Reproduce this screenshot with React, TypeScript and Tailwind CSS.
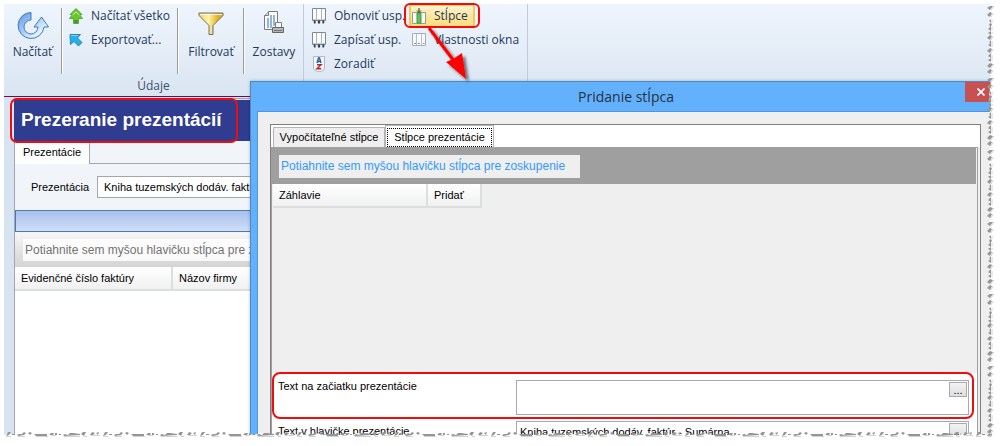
import type { ReactNode } from 'react';
import clsx from 'clsx';

const GROUP_HINT = 'Potiahnite sem myšou hlavičku stĺpca pre zoskupenie';

function RefreshIcon() {
  return (
    <svg className="shrink-0" width="32" height="28" viewBox="0 0 32 28">
      <defs>
        <linearGradient id="refresh" x1="0" y1="0" x2="1" y2="1">
          <stop offset="0" stopColor="#5f97df" />
          <stop offset="0.45" stopColor="#a6cbf7" />
          <stop offset="0.75" stopColor="#e8f4ff" />
          <stop offset="1" stopColor="#63b4f2" />
        </linearGradient>
      </defs>
      <path
        d="M14 0.500 A13 13 0 1 0 27 15 L31.500 15 L24.500 5 L17 15 L21 15 A7 7 0 1 1 14 8 Z"
        fill="url(#refresh)"
        stroke="#3f78c4"
        strokeLinejoin="round"
      />
    </svg>
  );
}

function DoubleUpIcon() {
  return (
    <svg className="shrink-0" width="14" height="16" viewBox="0 0 14 16">
      <path d="M7 0.500 L13 6.500 L10.500 6.500 L13.500 10.500 L9.500 10.500 L9.500 15.500 L4.500 15.500 L4.500 10.500 L0.500 10.500 L3.500 6.500 L1 6.500 Z" fill="#6cc52c" stroke="#4a9c22" strokeWidth="0.800" />
      <path d="M3.500 7 L7 4 L10.500 7" fill="none" stroke="#d3f2ae" />
      <path d="M5.500 12 H8.500 V15 H5.500 Z" fill="#3e9224" />
    </svg>
  );
}

function ExportIcon() {
  return (
    <svg className="shrink-0" width="14" height="14" viewBox="0 0 14 14">
      <path d="M1 1.500 H11.500 L8.500 5 L13 9.500 L9.500 13 L5 8.500 L1.500 11.500 Z" fill="#27b0e8" stroke="#1c7fae" strokeWidth="0.900" />
      <path d="M2 2.500 H9" stroke="#7bd6fa" />
    </svg>
  );
}

function FilterIcon() {
  return (
    <svg className="shrink-0" width="26" height="24" viewBox="0 0 26 24">
      <defs>
        <linearGradient id="funnel" x1="0" y1="0" x2="1" y2="0">
          <stop offset="0.100" stopColor="#f6dc62" />
          <stop offset="0.400" stopColor="#fff3ae" />
          <stop offset="0.800" stopColor="#dfb014" />
        </linearGradient>
      </defs>
      <path d="M1 1 H25 V3.500 L15 13.500 V22.500 H11 V13.500 L1 3.500 Z" fill="url(#funnel)" stroke="#6f6f6f" />
      <path d="M2 2.500 H24" stroke="#f6f3df" />
    </svg>
  );
}

function ReportIcon() {
  return (
    <svg className="shrink-0" width="22" height="24" viewBox="0 0 22 24">
      <path d="M5.500 1.500 H14.500 V19.500 H1.500 V5.500 Z" fill="#fafafa" stroke="#7c7c7c" />
      <path d="M5.500 1.500 V5.500 H1.500" fill="#d8d8d8" stroke="#7c7c7c" />
      <path d="M5 8 V18 M8 5 V18 M11 5 V16" stroke="#94b5d8" strokeWidth="2" />
      <path d="M12.500 12.500 H18.500 V17.500 H12.500 Z" fill="#f7f7f7" stroke="#7c7c7c" />
      <path d="M9.500 17.500 H20.500 V22.500 H9.500 Z" fill="#b5b5b5" stroke="#676767" />
      <path d="M11 20.500 H19" stroke="#777777" />
    </svg>
  );
}

function ColumnsIcon() {
  return (
    <svg className="shrink-0" width="14" height="16" viewBox="0 0 14 16">
      <path d="M0.500 0.500 H13.500 V12.500 H0.500 Z" fill="#fbfcfe" stroke="#7f8791" />
      <path d="M4.500 1 V12 M9.500 1 V12" stroke="#aab2bc" />
      <path d="M1 11.500 H13" stroke="#c3cad2" />
      <path d="M1 14 H4 M5.500 14 H8.500 M10 14 H13" stroke="#8d939b" />
      <path d="M2 14 H3.500 M6 14 H8 M10.500 14 H12" stroke="#3c4148" strokeWidth="3" />
    </svg>
  );
}

function SortIcon() {
  return (
    <svg className="shrink-0" width="14" height="16" viewBox="0 0 14 16">
      <path d="M1.500 0.500 H12.500 V12 C12.500 14 10 15.500 7 15.500 C4 15.500 1.500 14 1.500 12 Z" fill="#f5f7fa" stroke="#b0b8c2" />
      <path d="M5 7 L6.500 2 H7.500 L9 7 M5.500 5.500 H8.500" fill="none" stroke="#21609f" strokeWidth="1.400" />
      <path d="M5 8.800 H9 L5 12.800 H9.200" fill="none" stroke="#b52a2a" strokeWidth="1.500" />
    </svg>
  );
}

function AddColumnIcon() {
  return (
    <svg className="shrink-0" width="14" height="16" viewBox="0 0 14 16">
      <path d="M0.500 4.500 H13.500 V15.500 H0.500 Z" fill="#fdfcf4" stroke="#9a9a90" />
      <path d="M5 5 H9 V15 H5 Z" fill="#5fc25a" stroke="#419b45" />
      <path d="M7 0 V4 M5 2.500 L7 4.500 L9 2.500" fill="none" stroke="#303030" />
    </svg>
  );
}

function PropertiesIcon() {
  return (
    <svg className="shrink-0" width="14" height="14" viewBox="0 0 14 14">
      <path d="M0.500 0.500 H13.500 V12.500 H0.500 Z" fill="#f6f8fb" stroke="#a5adb8" />
      <path d="M4.500 1 V12 M9.500 1 V12" stroke="#b7bec7" />
      <path d="M2 10.500 H4 M6 10.500 H8 M11 10.500 H12.500" stroke="#8b929b" />
    </svg>
  );
}

function LargeButton({ icon, label, className }: { icon: ReactNode; label: string; className?: string }) {
  return (
    <button type="button" className={clsx('flex h-[60px] flex-col items-center justify-between', className)}>
      {icon}
      <span className="leading-6">{label}</span>
    </button>
  );
}

function SmallButton({ icon, label }: { icon: ReactNode; label: string }) {
  return (
    <button type="button" className="flex h-6 items-center gap-2 whitespace-nowrap px-[6px]">
      {icon}
      {label}
    </button>
  );
}

function Divider() {
  return <div className="mt-1 h-[66px] w-[2px] shrink-0 border-l border-[#9a9a9a] bg-white" />;
}

function Ribbon() {
  return (
    <header className="flex h-[93px] shrink-0 border-b border-[#850051] bg-linear-to-b from-[#eef5fd] via-[#e5edf8] to-[#d9e5f1] font-['Open_Sans',sans-serif] text-[12px] text-[#1e395b]">
      <div className="flex w-[300px] shrink-0 flex-col border-r border-[#c0cbdb]">
        <div className="flex h-[70px]">
          <LargeButton icon={<RefreshIcon />} label="Načítať" className="w-[57px] pt-2" />
          <Divider />
          <div className="flex w-[114px] flex-col">
            <SmallButton icon={<DoubleUpIcon />} label="Načítať všetko" />
            <SmallButton icon={<ExportIcon />} label="Exportovať..." />
          </div>
          <Divider />
          <LargeButton icon={<FilterIcon />} label="Filtrovať" className="w-16 pt-2" />
          <Divider />
          <LargeButton icon={<ReportIcon />} label="Zostavy" className="w-[58px] pt-[6px]" />
        </div>
        <div className="text-center leading-6 text-[#3b5170]">Údaje</div>
      </div>
      <div className="flex w-[224px] shrink-0 border-r border-[#c0cbdb]">
        <div className="flex w-[102px] flex-col items-start pl-[2px]">
          <SmallButton icon={<ColumnsIcon />} label="Obnoviť usp." />
          <SmallButton icon={<ColumnsIcon />} label="Zapísať usp." />
          <SmallButton icon={<SortIcon />} label="Zoradiť" />
        </div>
        <div className="flex flex-col items-start">
          <button
            type="button"
            className="mx-[3px] flex h-6 items-center gap-2 whitespace-nowrap border-2 border-[#f0c95f] bg-linear-to-b from-[#fdf3cf] via-[#fde7a0] to-[#fbdc7e] pr-[5px] pl-px"
          >
            <AddColumnIcon />
            Stĺpce
          </button>
          <SmallButton icon={<PropertiesIcon />} label="Vlastnosti okna" />
        </div>
      </div>
    </header>
  );
}

const headCell =
  'h-6 border-r-2 border-b-2 border-[#dcdfdf] bg-linear-to-b from-white to-[#f1f1f1] px-[6px] text-left font-normal whitespace-nowrap';

function PresentationView() {
  return (
    <section className="grow bg-[#d6e4f2] pl-[10px] pt-[1px]">
      <div className="flex h-full flex-col border-t border-[#a3a6aa]">
        <h1 className="mt-px flex h-[41px] shrink-0 items-center bg-[#303c8f] px-[7px] text-[19px] font-bold text-white">
          Prezeranie prezentácií
        </h1>
        <div className="flex grow flex-col border-l border-[#a3a6aa] bg-[#f1f4f9]">
          <div className="flex h-[23px]" role="tablist">
            <button type="button" role="tab" aria-selected="true" className="w-[75px] border-r border-[#a3a6aa] bg-white">
              Prezentácie
            </button>
            <div className="grow border-b border-[#a3a6aa]" />
          </div>
          <div className="flex h-[46px] items-center pl-4">
            <label htmlFor="presentation" className="w-[66px]">
              Prezentácia
            </label>
            <input
              id="presentation"
              defaultValue="Kniha tuzemských dodáv. faktúr - Sumárna"
              className="h-[22px] w-80 border border-[#a3a6aa] bg-white px-[6px]"
            />
          </div>
          <div className="h-[22px] border border-[#4f79b3] bg-linear-to-b from-[#a7c0ec] to-[#d0dff8]" />
          <div className="mt-px bg-linear-to-b from-[#f6f6f6] to-[#d3d3d3] px-2 py-[6px]">
            <div className="w-80 bg-white/85 px-[2px] text-[12px] leading-[22px] whitespace-nowrap text-[#737373]">{GROUP_HINT}</div>
          </div>
          <div className="grow bg-white">
            <table className="border-separate border-spacing-0">
              <thead>
                <tr>
                  <th className={clsx(headCell, 'w-[158px]')}>Evidenčné číslo faktúry</th>
                  <th className={clsx(headCell, 'w-[158px]')}>Názov firmy</th>
                </tr>
              </thead>
            </table>
          </div>
        </div>
      </div>
    </section>
  );
}

function TextRow({ id, label, value, tall, marked }: { id: string; label: string; value?: string; tall?: boolean; marked?: boolean }) {
  return (
    <div className="relative flex items-start pr-[6px] pl-[6px]">
      <label htmlFor={id} className="w-[238px] shrink-0 leading-[13px]">
        {label}
      </label>
      <div className={clsx('relative grow', tall ? 'h-[35px]' : 'h-[22px]')}>
        <textarea
          id={id}
          defaultValue={value}
          className="block h-full w-full resize-none overflow-hidden border border-[#a9a9b0] bg-white px-[3px] leading-[20px]"
        />
        <button
          type="button"
          aria-label={label}
          className="absolute top-[2px] right-[2px] flex h-[15px] w-[18px] items-center justify-center border border-[#a9a9b0] bg-linear-to-b from-[#f3f3f3] to-[#dedede] leading-3"
        >
          ...
        </button>
      </div>
      {marked && <div className="pointer-events-none absolute -top-2 right-px -bottom-1 left-0 rounded-lg border-2 border-[#f00c0c]" />}
    </div>
  );
}

function AddColumnDialog() {
  return (
    <div
      role="dialog"
      aria-labelledby="dialog-title"
      className="absolute top-[77px] -right-[11px] -bottom-2 left-[246px] flex flex-col border border-[#4b8ac6] bg-[#63b1fd] shadow-[0_0_3px_rgba(0,0,0,0.25)]"
    >
      <div className="relative flex h-[29px] shrink-0 items-center justify-center">
        <h2 id="dialog-title" className="font-['Open_Sans',sans-serif] text-[14px] text-[#24323f]">
          Pridanie stĺpca
        </h2>
        <button
          type="button"
          aria-label="Zavrieť"
          className="absolute top-0 right-1 flex h-5 w-8 items-center justify-center bg-[#c75050]"
        >
          <svg width="8" height="8" viewBox="0 0 8 8">
            <path d="M0.500 0.500 L7.500 7.500 M7.500 0.500 L0.500 7.500" stroke="white" strokeWidth="1.700" />
          </svg>
        </button>
      </div>
      <div className="ml-[6px] flex grow flex-col border-t border-l border-[#4f97dc] bg-[#efefef] pt-3 pr-5 pl-3">
        <div className="flex grow flex-col border border-b-0 border-[#808080] bg-[#efefef]">
          <div className="flex h-[22px] items-end bg-white pl-[2px]" role="tablist">
            <button
              type="button"
              role="tab"
              aria-selected="false"
              className="h-5 w-[112px] border border-b-0 border-[#b4b4b4] bg-[#efefef]"
            >
              Vypočítateľné stĺpce
            </button>
            <button
              type="button"
              role="tab"
              aria-selected="true"
              className="h-[22px] w-[109px] border border-b-0 border-[#b4b4b4] bg-white p-px pb-0"
            >
              <span className="block border border-dotted border-black leading-[17px]">Stĺpce prezentácie</span>
            </button>
          </div>
          <div className="mr-[2px] flex grow flex-col border-t border-r border-l border-[#a0a0a0]">
            <div className="mr-px bg-[#9f9f9f] px-[7px] pt-[7px] pb-[6px]">
              <div className="w-[301px] bg-[#efefef] px-[2px] text-[12px] leading-[23px] whitespace-nowrap text-[#3399ff]">
                {GROUP_HINT}
              </div>
            </div>
            <div className="h-[189px] shrink-0">
              <table className="ml-px border-separate border-spacing-0">
                <thead>
                  <tr>
                    <th className={clsx(headCell, 'w-[155px]')}>Záhlavie</th>
                    <th className={clsx(headCell, 'w-[54px]')}>Pridať</th>
                  </tr>
                </thead>
              </table>
            </div>
            <div className="flex grow flex-col gap-[6px] bg-white pt-[7px] pr-[2px]">
              <TextRow id="text-start" label="Text na začiatku prezentácie" tall marked />
              <div className="[&_label]:pt-1">
                <TextRow id="text-head" label="Text v hlavičke prezentácie" value="Kniha tuzemských dodáv. faktúr - Sumárna" />
              </div>
            </div>
          </div>
        </div>
      </div>
    </div>
  );
}

// Torn paper edge, one ragged tile repeated along the side
function TornEdges() {
  return (
    <>
      <svg className="pointer-events-none absolute top-1 right-[5px] h-[calc(100%-15px)] w-[10px]" aria-hidden="true">
        <defs>
          <pattern id="torn-right" width="10" height="72" patternUnits="userSpaceOnUse">
            <path d="M4 0 L2 4 L4 7 L2 11 L3 14 L2 18 L3 21 L2 24 L4 28 L3 33 L2 38 L4 41 L2 45 L3 50 L2 54 L3 58 L2 62 L4 66 L3 69 L4 72 H10 V0 Z" fill="white" />
            <path
              d="M0 4 L3 2 L6 2 L3 6 Z M0 11 L3 8 L5 9 L3 13 Z M2 17 L4 15 L4 19 Z M2 20 L4 19 L5 21 L3 23 Z M1 25 L4 22 L4 27 Z M1 29 L4 27 L4 31 Z M0 34 L3 31 L5 32 L3 36 Z M2 38 L4 36 L4 40 Z M1 41 L4 39 L4 43 Z M0 47 L3 44 L5 45 L3 49 Z M1 52 L4 49 L4 54 Z M1 56 L4 54 L4 58 Z M0 62 L3 59 L6 60 L3 64 Z M0 68 L3 65 L5 66 L3 70 Z"
              fill="#959595"
            />
            <path d="M4 6 L7 2 M4 13 L6 9 M5 16 V19 M5 23 V26 M5 28 V30 M4 36 L6 32 M5 37 V43 M4 49 L6 45 M5 51 V57 M4 64 L7 60 M4 70 L6 66" stroke="#d2d2d2" />
          </pattern>
        </defs>
        <rect width="100%" height="100%" fill="url(#torn-right)" />
      </svg>
      <svg className="pointer-events-none absolute bottom-[7px] left-1 h-2 w-[calc(100%-14px)]" aria-hidden="true">
        <defs>
          <pattern id="torn-bottom" width="97" height="8" patternUnits="userSpaceOnUse">
            <path d="M0 4 L4 2 L8 4 L17 3 L20 2 L26 3 L30 4 L44 4 L51 3 L56 4 L63 2 L70 4 L82 4 L88 2 L97 4 V8 H0 Z" fill="white" />
            <path
              d="M2 5 L4 1 L7 1 L5 4 Z M8 3 H11 V4 H8 Z M13 4 L15 3 H18 L20 1 L22 2 L20 4 L14 5 Z M24 2 L26 1 L28 2 L26 4 Z M30 3 H43 V5 H32 Z M45 4 L47 2 L50 2 L49 4 Z M51 2 H53 V4 H51 Z M55 3 H57 V4 H55 Z M59 4 L61 3 L64 4 L66 2 L69 2 L76 3 V4 L60 5 Z M77 3 L79 1 L82 1 L80 5 Z M86 4 L88 1 L91 2 L89 4 Z M92 2 L95 1 L94 4 Z"
              fill="#959595"
            />
            <path d="M2 5.500 H7 M14 5.500 H21 M32 5.500 H44 M47 4.500 H52 M60 5.500 H76 M80 5.500 H83 M87 4.500 H96" fill="none" stroke="#d2d2d2" />
          </pattern>
        </defs>
        <rect width="100%" height="100%" fill="url(#torn-bottom)" />
      </svg>
    </>
  );
}

function Annotations() {
  return (
    <svg className="pointer-events-none absolute top-0 left-0" width="500" height="160" viewBox="0 0 500 160" aria-hidden="true">
      <defs>
        <filter id="arrow-shadow" x="-30%" y="-30%" width="170%" height="170%">
          <feDropShadow dx="3" dy="3" stdDeviation="1.500" floodColor="#000000" floodOpacity="0.550" />
        </filter>
      </defs>
      <g fill="none" stroke="#f00c0c" strokeWidth="2">
        <rect x="405" y="4" width="74" height="23" rx="5" />
        <rect x="11" y="99" width="226" height="43" rx="6" />
      </g>
      <g filter="url(#arrow-shadow)" fill="#ff0000">
        <path d="M429 28 L454 61" stroke="#ff0000" strokeWidth="3" />
        <path d="M466 79 L446 62 L453 59 L462 53 Z" />
      </g>
    </svg>
  );
}

export default function App() {
  return (
    <main className="relative h-screen overflow-hidden bg-white pt-1 pr-[11px] pb-[11px] pl-1 font-['Liberation_Sans',Arial,sans-serif] text-[11px] text-black">
      <div className="relative flex h-full flex-col overflow-hidden">
        <Ribbon />
        <PresentationView />
        <AddColumnDialog />
      </div>
      <TornEdges />
      <Annotations />
    </main>
  );
}
